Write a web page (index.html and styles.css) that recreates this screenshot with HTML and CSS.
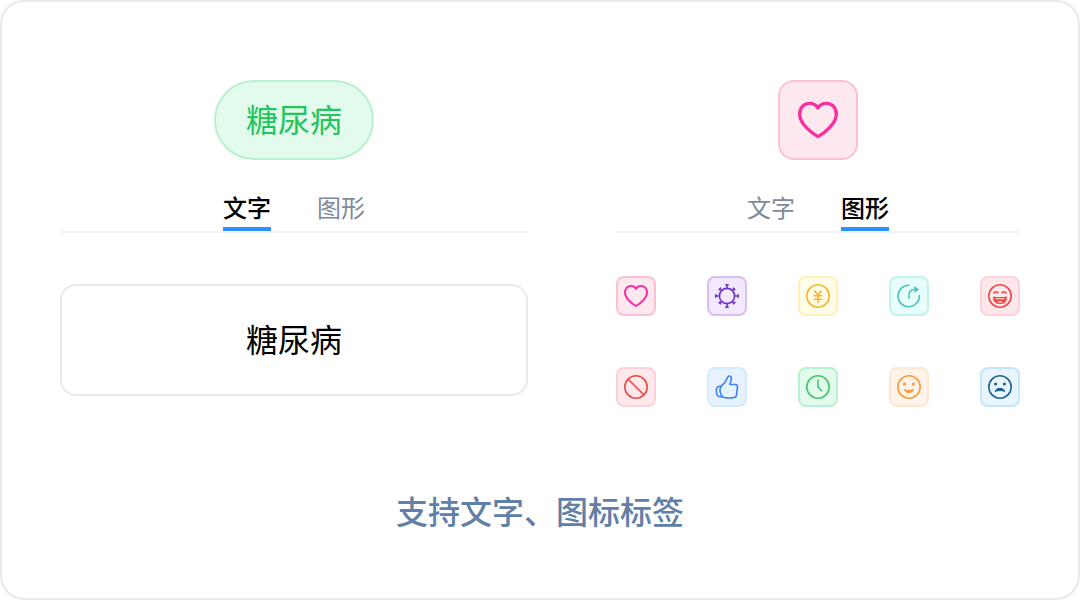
FILE: index.html
```
<!DOCTYPE html>
<html lang="zh-CN">
  <head>
    <meta charset="utf-8">
    <meta name="viewport" content="width=device-width, initial-scale=1">
    <title>支持文字、图标标签</title>
    <link rel="stylesheet" href="styles.css">
  </head>
  <body>
    <main class="card">
      <div class="panels">
        <section class="panel">
          <div class="preview">
            <span class="tag">糖尿病</span>
          </div>
          <div class="tabs" role="tablist">
            <button class="tab" role="tab" aria-selected="true">文字</button>
            <button class="tab" role="tab" aria-selected="false">图形</button>
          </div>
          <input class="tag-input" type="text" value="糖尿病" aria-label="标签文字">
        </section>

        <section class="panel">
          <div class="preview">
            <span class="icon-preview pink">
              <svg viewBox="0 0 24 24"><path d="M12 22C8.5 20 1 14.4 1 8.5C1 4.8 3.5 2 6.8 2C9 2 10.9 2.8 12 4.8C13.1 2.8 15 2 17.2 2C20.5 2 23 4.8 23 8.5C23 14.4 15.5 20 12 22Z"/></svg>
            </span>
          </div>
          <div class="tabs" role="tablist">
            <button class="tab" role="tab" aria-selected="false">文字</button>
            <button class="tab" role="tab" aria-selected="true">图形</button>
          </div>
          <div class="icons">
            <button class="icon pink" aria-label="爱心">
              <svg viewBox="0 0 24 24"><path d="M12 22C8.5 20 1 14.4 1 8.5C1 4.8 3.5 2 6.8 2C9 2 10.9 2.8 12 4.8C13.1 2.8 15 2 17.2 2C20.5 2 23 4.8 23 8.5C23 14.4 15.5 20 12 22Z"/></svg>
            </button>
            <button class="icon purple" aria-label="病毒">
              <svg viewBox="0 0 24 24">
                <circle cx="12" cy="12" r="7.6"/>
                <path d="M12 4.4V1M10.8 .8h2.4M12 19.6V23M10.8 23.2h2.4M4.4 12H1M.8 10.8v2.4M19.6 12H23M23.2 10.8v2.4M6.6 6.6L4.8 4.8M4.2 5.6L5.6 4.2M17.4 6.6L19.2 4.8M18.4 4.2L19.8 5.6M6.6 17.4L4.8 19.2M4.2 18.4L5.6 19.8M17.4 17.4L19.2 19.2M18.4 19.8L19.8 18.4"/>
              </svg>
            </button>
            <button class="icon yellow" aria-label="费用">
              <svg viewBox="0 0 24 24">
                <circle cx="12" cy="12" r="11.2"/>
                <path d="M9 7.2L12 11L15 7.2M12 11v7.4M8.2 11.8h7.6M8.2 15.2h7.6"/>
              </svg>
            </button>
            <button class="icon teal" aria-label="复诊">
              <svg viewBox="0 0 24 24">
                <path d="M12 1.3A10.7 10.7 0 1 0 22.4 11.5M12 14.3V11Q12 5.5 18 5.5"/>
                <path class="solid" d="M17.2 2L22.2 5.4L17.2 8.8Z"/>
              </svg>
            </button>
            <button class="icon red" aria-label="大笑">
              <svg viewBox="0 0 24 24">
                <circle cx="12" cy="12" r="11.2"/>
                <path d="M5.8 9Q7.8 6.8 9.8 8.6M14.2 8.6Q16.2 6.8 18.2 9"/>
                <path class="solid" fill-rule="evenodd" d="M5 12.4Q12 13.6 19 12.4Q19.4 20 12 20Q4.6 20 5 12.4ZM7.4 13.9Q12 14.6 16.6 13.9L16.3 15Q12 15.6 7.7 15ZM9 18.1Q12 16.4 15 18.1Q12 19.4 9 18.1Z"/>
              </svg>
            </button>
            <button class="icon red" aria-label="禁止">
              <svg viewBox="0 0 24 24"><circle cx="12" cy="12" r="11.2"/><path d="M4.2 4.2L19.8 19.8"/></svg>
            </button>
            <button class="icon blue" aria-label="点赞">
              <svg viewBox="0 0 24 24">
                <path d="M6.4 10.8L9.6 7.8L12.7 2.3Q13.8 .3 15.5 1.4Q16.8 2.2 16.3 4.1L15 9.5H20.3Q22.8 9.7 22.5 12.2L21.5 19.8Q21.2 22.2 19 22.5Q14 23.5 9.5 22.5C5 21.3 3.8 14 6.4 10.8Z"/>
                <path d="M6.4 11.2H4.6C2 11.2 1.1 14 1.3 16.5C1.5 19.5 2.9 21.7 5 21.7H7.6"/>
              </svg>
            </button>
            <button class="icon green" aria-label="时钟">
              <svg viewBox="0 0 24 24"><circle cx="12" cy="12" r="11.2"/><path d="M12 5V12L15.6 15.8"/></svg>
            </button>
            <button class="icon orange" aria-label="微笑">
              <svg viewBox="0 0 24 24">
                <circle cx="12" cy="12" r="11.2"/>
                <circle class="solid" cx="7.6" cy="9" r="1.6"/>
                <circle class="solid" cx="16.4" cy="9" r="1.6"/>
                <path class="solid" d="M6.6 13.8Q12 16.4 17.4 13.8Q16.2 18 12 18Q7.8 18 6.6 13.8Z"/>
              </svg>
            </button>
            <button class="icon navy" aria-label="难过">
              <svg viewBox="0 0 24 24">
                <circle cx="12" cy="12" r="11.2"/>
                <circle class="solid" cx="7.6" cy="9" r="1.6"/>
                <circle class="solid" cx="16.4" cy="9" r="1.6"/>
                <path class="solid" d="M6.6 17.2Q7.8 12.8 12 12.8Q16.2 12.8 17.4 17.2Q12 14.8 6.6 17.2Z"/>
              </svg>
            </button>
          </div>
        </section>
      </div>
      <p class="caption">支持文字、图标标签</p>
    </main>
  </body>
</html>
```
FILE: styles.css
```
* {
  box-sizing: border-box;
}
body {
  margin: 0;
  background: #fff;
  color: #000;
  font-family: "Noto Sans CJK SC", sans-serif;
}
button,
input {
  font-family: inherit;
}
button {
  cursor: pointer;
}

.card {
  min-height: 100vh;
  padding: 78px 58px 60px;
  border: 2px solid #e6eaee;
  border-radius: 24px;
}
.panels {
  display: grid;
  grid-template-columns: 468fr 404fr;
  gap: 88px;
}
.preview {
  display: flex;
  justify-content: center;
}

.tag {
  height: 80px;
  padding: 0 30px;
  border: 2px solid #b9f0cf;
  border-radius: 40px;
  background: #e2fbec;
  color: #22c55e;
  font-size: 32px;
  line-height: 72px;
}
.icon-preview {
  display: flex;
  align-items: center;
  justify-content: center;
  width: 80px;
  height: 80px;
  border: 2px solid;
  border-radius: 16px;
}
.icon-preview svg {
  width: 40px;
  height: 40px;
}

.tabs {
  display: flex;
  justify-content: center;
  gap: 46px;
  margin-top: 30px;
  border-bottom: 2px solid #eef3f8;
}
.tab {
  height: 41px;
  padding: 0 0 3px;
  border: 0;
  border-bottom: 4px solid transparent;
  background: none;
  color: #7e8a9a;
  font-size: 24px;
  line-height: 34px;
}
.tab[aria-selected="true"] {
  border-color: #2b8fff;
  color: #000;
  font-weight: 500;
}

.tag-input {
  display: block;
  width: 100%;
  height: 112px;
  margin-top: 51px;
  padding: 0 16px 4px;
  border: 2px solid #e6eaee;
  border-radius: 16px;
  background: #fff;
  color: #000;
  font-size: 32px;
  text-align: center;
}

.icons {
  display: grid;
  grid-template-columns: repeat(5, 40px);
  justify-content: space-between;
  row-gap: 51px;
  margin-top: 43px;
}
.icon {
  display: flex;
  align-items: center;
  justify-content: center;
  height: 40px;
  padding: 0;
  border: 2px solid;
  border-radius: 8px;
}
.icon svg {
  width: 24px;
  height: 24px;
}

svg {
  fill: none;
  stroke: currentColor;
  stroke-width: 1.6;
  stroke-linecap: round;
  stroke-linejoin: round;
}
svg .solid {
  fill: currentColor;
  stroke: none;
}
.pink svg {
  stroke-width: 2;
}

/* tag colours */
.pink { color: #f72fa0; background: #fee8ef; border-color: #fcbfd8; }
.purple { color: #6d35cf; background: #f2e8ff; border-color: #d9bff5; }
.yellow { color: #f2b92f; background: #fffce8; border-color: #fff0b8; }
.teal { color: #4fc4c0; background: #e8fefb; border-color: #c0f3ea; }
.red { color: #ec4b45; background: #fee8ec; border-color: #fdd0dc; }
.blue { color: #3b82f6; background: #e8f1fe; border-color: #d2ebfd; }
.green { color: #45c768; background: #e2fbec; border-color: #b9f0cf; }
.orange { color: #fb9a3c; background: #fff3ea; border-color: #ffe6cf; }
.navy { color: #1e6591; background: #e8f4fe; border-color: #c2e6fc; }

.caption {
  margin: 79px 0 0;
  color: #6080a8;
  font-size: 32px;
  font-weight: 500;
  line-height: 48px;
  text-align: center;
}
```
